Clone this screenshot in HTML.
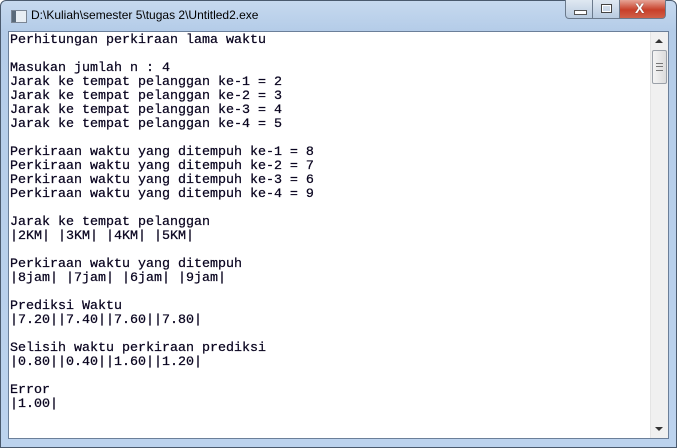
<!DOCTYPE html>
<html><head><style>
body{margin:0;width:677px;height:448px;overflow:hidden;background:#fff;position:relative;font-family:"Liberation Sans",sans-serif}
.frame{position:absolute;left:0;top:0;width:675px;height:446px;border:1px solid #4a5a6e;border-radius:6px 6px 0 0;background:linear-gradient(#c6d9ef,#b4cce8 30px,#bcd3ee);}
.title{position:absolute;left:31px;top:8px;font-size:12px;color:#000}
.icon{position:absolute;left:11px;top:10px;width:14px;height:11px;border:1px solid #7a8594;background:linear-gradient(90deg,#5a6a7a 0 4px,#e8eef4 4px)}
.client{position:absolute;left:8px;top:31px;width:659px;height:406px;background:#fff;border:1px solid #6b7f99;overflow:hidden}
.txt{position:absolute;left:1px;top:2px;margin:0;font-family:"Liberation Mono",monospace;font-size:13.33px;line-height:14px;color:#0a0520;white-space:pre;-webkit-text-stroke:0.25px #0a0520}
.sb{position:absolute;right:0;top:0;width:17px;height:406px;background:#f0f0f0;border-left:1px solid #e4e4e4}
.thumb{position:absolute;left:1px;top:18px;width:13px;height:32px;border:1px solid #9aa0a8;border-radius:2px;background:linear-gradient(90deg,#f4f4f4,#dcdcdc)}
.btns{position:absolute;left:565px;top:0;width:102px;height:19px}
.b{position:absolute;top:0;height:18px;border:1px solid #6b7a8c;border-top:none;background:linear-gradient(#dfe8f2,#b9cbe0)}
</style></head><body>
<div class="frame"></div>
<div class="icon"></div>
<div class="title">D:\Kuliah\semester 5\tugas 2\Untitled2.exe</div>
<div class="btns">
<div class="b" style="left:0;width:26px;border-radius:0 0 0 4px"><div style="position:absolute;left:8px;top:10px;width:11px;height:3px;background:#fff;border:1px solid #555"></div></div>
<div class="b" style="left:27px;width:26px"><div style="position:absolute;left:8px;top:4px;width:9px;height:7px;border:1px solid #444;box-shadow:inset 0 0 0 1px #fff"></div></div>
<div class="b" style="left:54px;width:45px;border-radius:0 0 4px 0;background:linear-gradient(#e6a496,#c8402a 55%,#d06048)"><div style="position:absolute;left:15px;top:0px;color:#fff;font-weight:bold;font-size:14px;text-shadow:0 0 1px #333">X</div></div>
</div>
<div class="client">
<pre class="txt">Perhitungan perkiraan lama waktu

Masukan jumlah n : 4
Jarak ke tempat pelanggan ke-1 = 2
Jarak ke tempat pelanggan ke-2 = 3
Jarak ke tempat pelanggan ke-3 = 4
Jarak ke tempat pelanggan ke-4 = 5

Perkiraan waktu yang ditempuh ke-1 = 8
Perkiraan waktu yang ditempuh ke-2 = 7
Perkiraan waktu yang ditempuh ke-3 = 6
Perkiraan waktu yang ditempuh ke-4 = 9

Jarak ke tempat pelanggan
|2KM| |3KM| |4KM| |5KM|

Perkiraan waktu yang ditempuh
|8jam| |7jam| |6jam| |9jam|

Prediksi Waktu
|7.20||7.40||7.60||7.80|

Selisih waktu perkiraan prediksi
|0.80||0.40||1.60||1.20|

Error
|1.00|</pre>
<div class="sb">
<div style="position:absolute;left:4px;top:7px;width:0;height:0;border:4px solid transparent;border-bottom:4px solid #333;border-top:none"></div>
<div class="thumb"><div style="position:absolute;left:3px;top:12px;width:7px;height:6px;border-top:1px solid #777;border-bottom:1px solid #777"><div style="margin-top:2px;border-top:1px solid #777"></div></div></div>
<div style="position:absolute;left:4px;bottom:7px;width:0;height:0;border:4px solid transparent;border-top:4px solid #333;border-bottom:none"></div>
</div>
</div>
</body></html>
